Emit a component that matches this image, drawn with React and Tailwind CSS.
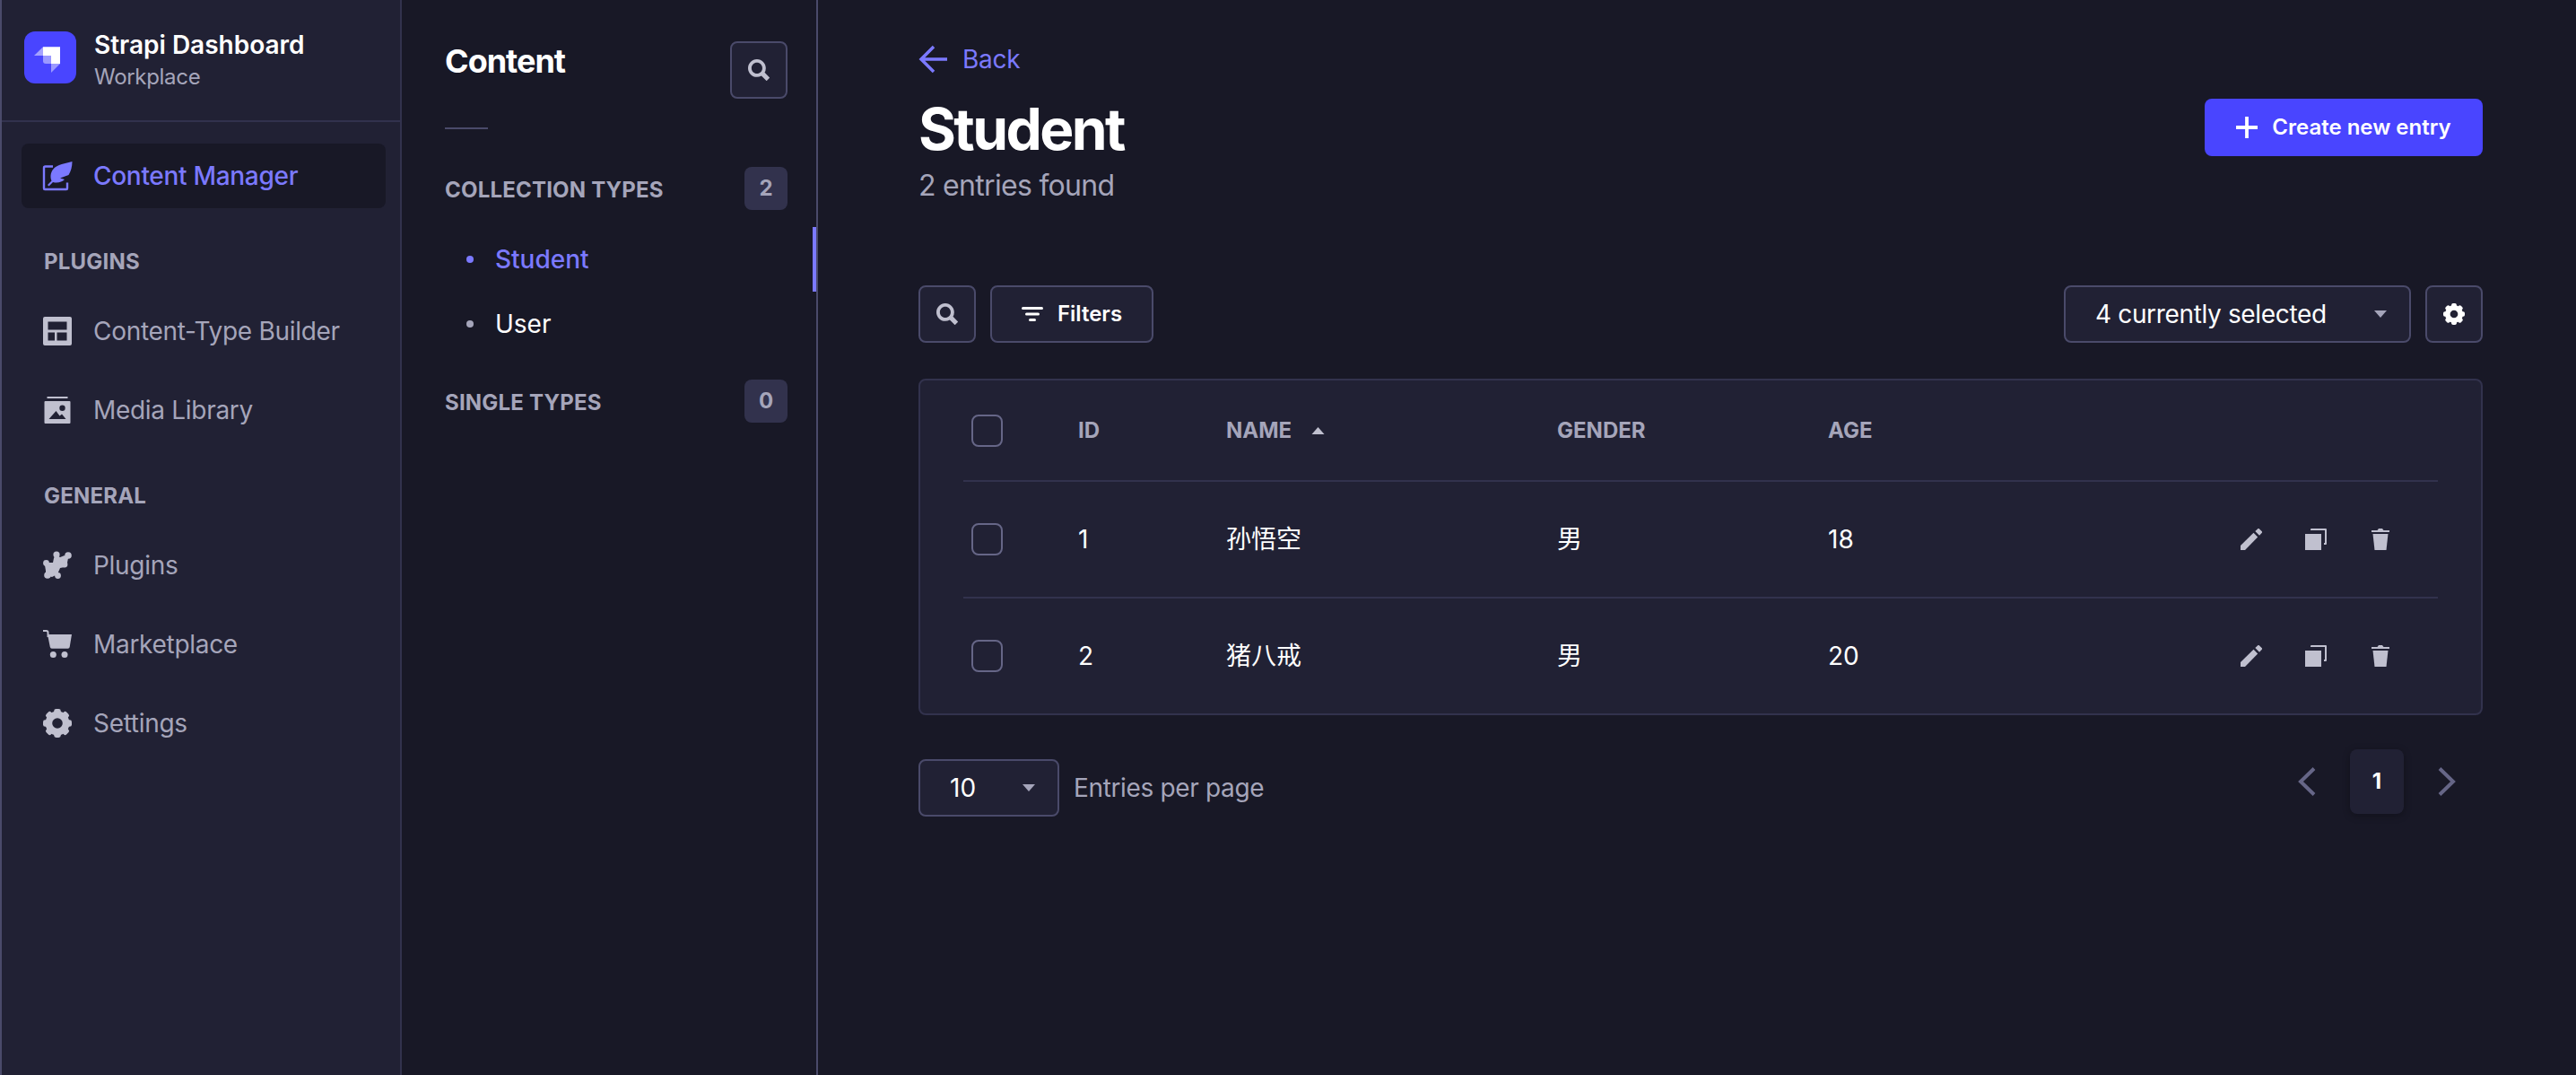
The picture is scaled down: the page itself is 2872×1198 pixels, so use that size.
import React from 'react';

const sans = 'font-["Inter","Noto_Sans_CJK_SC",sans-serif]';

function SearchIcon({ className }) {
  return (
    <svg viewBox="0 0 24 24" className={className} fill="currentColor">
      <path d="M23.813 20.163l-5.3-5.367a9.792 9.792 0 001.312-4.867C19.825 4.455 15.375 0 9.913 0 4.45 0 0 4.455 0 9.929c0 5.473 4.45 9.928 9.912 9.928a9.757 9.757 0 005.007-1.4l5.275 5.35a.634.634 0 00.913 0l2.706-2.737a.641.641 0 000-.907zM9.91 3.867c3.338 0 6.05 2.718 6.05 6.061s-2.712 6.061-6.05 6.061c-3.337 0-6.05-2.718-6.05-6.06 0-3.344 2.713-6.062 6.05-6.062z" />
    </svg>
  );
}

function GearIcon({ className }) {
  return (
    <svg viewBox="0 0 32 32" className={className} fill="currentColor">
      <circle cx="16" cy="16" r="9.6" fill="none" stroke="currentColor" strokeWidth="7.6" />
      {[0, 45, 90, 135, 180, 225, 270, 315].map((deg) => (
        <rect key={deg} x="12.2" y="0" width="7.6" height="6" rx="2.4" transform={`rotate(${deg} 16 16)`} />
      ))}
    </svg>
  );
}

function Caret({ className }) {
  return (
    <svg viewBox="0 0 14 8" className={className} fill="currentColor">
      <path d="M0 0h14L7 8z" />
    </svg>
  );
}

function StrapiLogo() {
  return (
    <svg viewBox="0 0 58 58" className="w-[58px] h-[58px] shrink-0 mt-[3px]">
      <rect width="58" height="58" rx="12" fill="#4945ff" />
      <path d="M21 17.3H40V36H30V27H21Z" fill="#fff" />
      <path d="M11 27L21 17.3V27Z" fill="#fff" opacity="0.5" />
      <path d="M21 27H30V36H24a3 3 0 0 1-3-3Z" fill="#fff" opacity="0.45" />
      <path d="M30 36H40L30 46Z" fill="#fff" opacity="0.45" />
    </svg>
  );
}

function FeatherIcon() {
  return (
    <svg viewBox="0 0 32 32" className="w-8 h-8 overflow-visible" fill="currentColor">
      <path d="M11 5.500H2.500A1.500 1.500 0 0 0 1 7v23a1 1 0 0 0 1 1h24a1 1 0 0 0 1-1v-6.500" fill="none" stroke="currentColor" strokeWidth="2.400" />
      <path d="M32.500 0C25 2.500 16 2.500 11 9c-3 4-3 9-1.500 12.500L5 26l1.500 1.500L11 23c5 1.500 10 0 13-3l-5-1.500L28.500 15C31 11 32.500 6 32.500 0Z" />
    </svg>
  );
}

function LayoutIcon() {
  return (
    <svg viewBox="0 0 32 32" className="w-8 h-8" fill="currentColor">
      <path fillRule="evenodd" d="M2 0h28a2 2 0 0 1 2 2v28a2 2 0 0 1-2 2H2a2 2 0 0 1-2-2V2a2 2 0 0 1 2-2ZM5.500 5.500v9h21v-9ZM5.500 17.500v9h7.500v-9ZM15.500 17.500v9h11v-9Z" />
    </svg>
  );
}

function MediaIcon() {
  return (
    <svg viewBox="0 0 32 32" className="w-8 h-8" fill="currentColor">
      <rect x="4.500" y="1" width="23" height="2" />
      <path fillRule="evenodd" d="M2.500 6h27a1 1 0 0 1 1 1v23a1 1 0 0 1-1 1h-27a1 1 0 0 1-1-1V7a1 1 0 0 1 1-1ZM21.500 10.500a3.200 3.200 0 1 0 0 6.400 3.200 3.200 0 0 0 0-6.400ZM6.500 26h19l-4.500-5.500-2.500 2-4-5.500Z" />
    </svg>
  );
}

function PuzzleIcon() {
  return (
    <svg viewBox="0 0 32 32" className="w-8 h-8" fill="currentColor">
      <path d="M14 4l5 3 5-2 4 3-1 5-3 5-5 1-3 7-6 3-7-2 0-5-1-6 3-3 6 0 1-5z" />
      <circle cx="15" cy="4" r="3.600" />
      <circle cx="28" cy="5" r="3.800" />
      <circle cx="24" cy="15" r="3.400" />
      <circle cx="3.500" cy="13.500" r="3.400" />
      <circle cx="5" cy="27" r="3.800" />
      <circle cx="16.500" cy="27.500" r="3.400" />
    </svg>
  );
}

function CartIcon() {
  return (
    <svg viewBox="0 0 32 32" className="w-8 h-8" fill="currentColor">
      <path d="M0 1h3.500a2 2 0 0 1 2 2v5" fill="none" stroke="currentColor" strokeWidth="2" />
      <path d="M5 5h27l-2.300 14a2 2 0 0 1-2 1.700H9.800a2 2 0 0 1-2-1.700Z" />
      <circle cx="11.300" cy="27.500" r="3.500" />
      <circle cx="24" cy="27.500" r="3.500" />
    </svg>
  );
}

function PencilIcon() {
  return (
    <svg viewBox="0 0 24 24" className="w-6 h-6" fill="currentColor">
      <path d="M0 24v-5L14.500 4.800l4.700 4.700L5 24Z" />
      <path d="M16.300 3 19 .4a1.400 1.400 0 0 1 2 0L23.600 3a1.400 1.400 0 0 1 0 2L21 7.700Z" />
    </svg>
  );
}

function CopyIcon() {
  return (
    <svg viewBox="0 0 24 24" className="w-6 h-6" fill="currentColor">
      <rect x="0" y="6" width="18" height="18" />
      <path d="M6 2V1a1 1 0 0 1 1-1h16a1 1 0 0 1 1 1v16a1 1 0 0 1-1 1h-2v-2h1V2Z" />
    </svg>
  );
}

function TrashIcon() {
  return (
    <svg viewBox="0 0 24 24" className="w-6 h-6" fill="currentColor">
      <path d="M2 4V2h6.500L10 0h4l1.500 2H22v2Z" />
      <path d="M3.500 6h17L18.500 24h-13Z" />
    </svg>
  );
}

function NavItem({ icon, label, active }) {
  return (
    <div
      className={`h-[72px] rounded-lg flex items-center pl-6 gap-6 text-[28px] tracking-[-0.3px] ${
        active ? 'bg-[#181826] text-[#7b79ff] font-medium' : 'text-[#a5a5ba]'
      }`}
    >
      <span className={active ? 'text-[#7b79ff]' : 'text-[#c0c0cf]'}>{icon}</span>
      {label}
    </div>
  );
}

function SectionLabel({ children }) {
  return (
    <div className="h-[22px] pl-[25px] flex items-center text-[24px] font-bold text-[#a5a5ba] uppercase tracking-[0.2px]">
      {children}
    </div>
  );
}

function Sidebar() {
  return (
    <aside className="w-[448px] shrink-0 min-h-[1198px] bg-[#212134] border-l-2 border-l-[#4a4a6a] border-r-2 border-r-[#32324d]">
      <div className="h-[136px] border-b-2 border-[#32324d] flex items-start gap-5 pl-[25px] pt-[32px]">
        <StrapiLogo />
        <div>
          <div className="text-[28px] leading-[36px] font-semibold text-white">Strapi Dashboard</div>
          <div className="text-[24px] leading-[36px] tracking-[-0.3px] text-[#a5a5ba]">Workplace</div>
        </div>
      </div>
      <div className="pl-[22px] pr-[16px] pt-6">
        <NavItem active icon={<FeatherIcon />} label="Content Manager" />
        <div className="mt-[49px] mb-[30px]"><SectionLabel>Plugins</SectionLabel></div>
        <div className="flex flex-col gap-4">
          <NavItem icon={<LayoutIcon />} label="Content-Type Builder" />
          <NavItem icon={<MediaIcon />} label="Media Library" />
        </div>
        <div className="mt-[49px] mb-[30px]"><SectionLabel>General</SectionLabel></div>
        <div className="flex flex-col gap-4">
          <NavItem icon={<PuzzleIcon />} label="Plugins" />
          <NavItem icon={<CartIcon />} label="Marketplace" />
          <NavItem icon={<GearIcon className="w-8 h-8" />} label="Settings" />
        </div>
      </div>
    </aside>
  );
}

function CountRow({ label, count, className }) {
  return (
    <div className={`flex items-center justify-between h-12 ${className}`}>
      <span className="text-[24px] font-bold text-[#a5a5ba] uppercase tracking-[0.2px] pt-[3px]">{label}</span>
      <span className="w-12 h-12 rounded-lg bg-[#32324d] text-[#a5a5ba] text-[24px] font-bold flex items-center justify-center">
        {count}
      </span>
    </div>
  );
}

function ContentPanel() {
  return (
    <section className="w-[464px] shrink-0 border-r-2 border-[#4a4a6a] pl-[48px] pr-[32px] pt-[46px] relative">
      <div className="flex justify-between items-start h-[64px]">
        <h2 className="text-[36px] leading-[44px] font-bold text-white tracking-[-1px]">Content</h2>
        <button className="w-16 h-16 rounded-lg bg-[#212134] border-2 border-[#4a4a6a] flex items-center justify-center text-[#c0c0cf]">
          <SearchIcon className="w-6 h-6" />
        </button>
      </div>
      <div className="w-12 h-[2px] bg-[#4a4a6a] mt-[32px]" />
      <CountRow label="Collection types" count="2" className="mt-[42px]" />
      <div className="mt-[19px] flex flex-col">
        <div className="h-[72px] flex items-center text-[28px] text-[#7b79ff] font-medium pl-[24px] gap-6">
          <span className="w-2 h-2 rounded-full bg-[#7b79ff]" />
          Student
        </div>
        <div className="h-[72px] flex items-center text-[28px] text-white pl-[24px] gap-6">
          <span className="w-2 h-2 rounded-full bg-[#a5a5ba]" />
          User
        </div>
      </div>
      {/* active row marker */}
      <div className="absolute right-0 top-[253px] w-1 h-[72px] bg-[#7b79ff]" />
      <CountRow label="Single types" count="0" className="mt-[26px]" />
    </section>
  );
}

function ToolButton({ children }) {
  return (
    <button className="w-16 h-16 rounded-lg bg-[#212134] border-2 border-[#4a4a6a] flex items-center justify-center">
      {children}
    </button>
  );
}

const gridCols = 'grid grid-cols-[128px_165px_369px_302px_120px_1fr] items-center';

function TableRow({ id, name, gender, age }) {
  return (
    <div className={`${gridCols} h-[130px] border-t-2 border-[#32324d] text-[28px] text-white`}>
      <span className="pl-[9px]">
        <span className="block w-[35px] h-9 rounded-lg border-2 border-[#666687] bg-[#212134]" />
      </span>
      <span>{id}</span>
      <span>{name}</span>
      <span>{gender}</span>
      <span>{age}</span>
      <span className="flex justify-end gap-12 pr-[52px] text-[#c0c0cf]">
        <PencilIcon />
        <CopyIcon />
        <TrashIcon />
      </span>
    </div>
  );
}

function MainArea() {
  const head = 'text-[24px] font-bold text-[#a5a5ba] uppercase';
  return (
    <main className="flex-1 pl-[112px] pr-[104px] pt-[48px]">
      <div className="flex items-center gap-[17px] text-[#7b79ff] text-[28px] tracking-[-0.3px] h-9">
        <svg viewBox="0 0 32 32" className="w-8 h-8" fill="none" stroke="currentColor" strokeWidth="3.500">
          <path d="M32 16H3M17 2 3 16l14 14" />
        </svg>
        Back
      </div>
      <div className="flex justify-between items-start">
        <div>
          <h1 className="text-[64px] leading-[76px] font-bold text-white mt-[22px] tracking-[-2.6px]">Student</h1>
          <p className="text-[32px] leading-[40px] text-[#a5a5ba] mt-[5px] tracking-[-0.7px]">2 entries found</p>
        </div>
        <button className="mt-[26px] w-[310px] h-16 rounded-lg bg-[#4945ff] text-white text-[24px] font-semibold flex items-center justify-center gap-4">
          <svg viewBox="0 0 24 24" className="w-6 h-6" fill="currentColor">
            <path d="M24 13.600a.300.300 0 0 1-.300.300h-9.800v9.800a.300.300 0 0 1-.300.300h-3.200a.300.300 0 0 1-.300-.300v-9.800H.300a.300.300 0 0 1-.300-.300v-3.200a.300.300 0 0 1 .300-.300h9.800V.300a.300.300 0 0 1 .300-.300h3.200a.300.300 0 0 1 .300.300v9.800h9.800a.300.300 0 0 1 .300.300z" />
          </svg>
          Create new entry
        </button>
      </div>

      <div className="flex justify-between mt-[91px]">
        <div className="flex gap-4">
          <ToolButton><SearchIcon className="w-6 h-6 text-[#c0c0cf]" /></ToolButton>
          <button className="w-[182px] h-16 rounded-lg bg-[#212134] border-2 border-[#4a4a6a] text-white text-[24px] font-semibold flex items-center justify-center gap-4">
            <svg viewBox="0 0 24 16" className="w-6 h-4" fill="currentColor">
              <rect width="24" height="3" rx="1.500" />
              <rect x="4" y="6.500" width="16" height="3" rx="1.500" />
              <rect x="8" y="13" width="8" height="3" rx="1.500" />
            </svg>
            Filters
          </button>
        </div>
        <div className="flex gap-4">
          <div className="w-[387px] h-16 rounded-lg bg-[#212134] border-2 border-[#4a4a6a] flex items-center justify-between pl-[33px] pr-[25px] text-[28px] tracking-[-0.35px] text-white">
            4 currently selected
            <Caret className="w-[14px] h-2 text-[#a5a5ba]" />
          </div>
          <ToolButton><GearIcon className="w-6 h-6 text-white" /></ToolButton>
        </div>
      </div>

      <div className="mt-10 rounded-lg bg-[#212134] border-2 border-[#32324d] px-[48px]">
        <div className={`${gridCols} h-[111px] ${head}`}>
          <span className="pl-[9px]">
            <span className="block w-[35px] h-9 rounded-lg border-2 border-[#666687] bg-[#212134]" />
          </span>
          <span>ID</span>
          <span className="flex items-center gap-[22px]">
            NAME
            <Caret className="w-[15px] h-2 text-[#c0c0cf] rotate-180" />
          </span>
          <span>GENDER</span>
          <span>AGE</span>
          <span />
        </div>
        <TableRow id="1" name="孙悟空" gender="男" age="18" />
        <TableRow id="2" name="猪八戒" gender="男" age="20" />
      </div>

      <div className="flex justify-between mt-[34px]">
        <div className="flex items-center gap-4 mt-[15px] h-16 self-start">
          <div className="w-[157px] h-16 rounded-lg bg-[#212134] border-2 border-[#4a4a6a] flex items-center justify-between pl-[33px] pr-[25px] text-[28px] text-white">
            10
            <Caret className="w-[14px] h-2 text-[#a5a5ba]" />
          </div>
          <span className="text-[28px] tracking-[-0.35px] text-[#a5a5ba]">Entries per page</span>
        </div>
        <div className="flex items-center gap-[38px] pr-[30px] text-[#666687]">
          <svg viewBox="0 0 20 32" className="w-5 h-8" fill="none" stroke="currentColor" strokeWidth="4">
            <path d="M18 1.500 3 16l15 14.500" />
          </svg>
          <div className="w-[60px] h-[72px] rounded-lg bg-[#212134] shadow-[0_2px_8px_rgba(3,3,5,0.3)] flex items-center justify-center text-white text-[24px] font-bold">
            1
          </div>
          <svg viewBox="0 0 20 32" className="w-5 h-8" fill="none" stroke="currentColor" strokeWidth="4">
            <path d="M2 1.500 17 16 2 30.500" />
          </svg>
        </div>
      </div>
    </main>
  );
}

export default function App() {
  return (
    <div className={`flex min-h-[1198px] bg-[#181826] ${sans}`}>
      <Sidebar />
      <ContentPanel />
      <MainArea />
    </div>
  );
}
